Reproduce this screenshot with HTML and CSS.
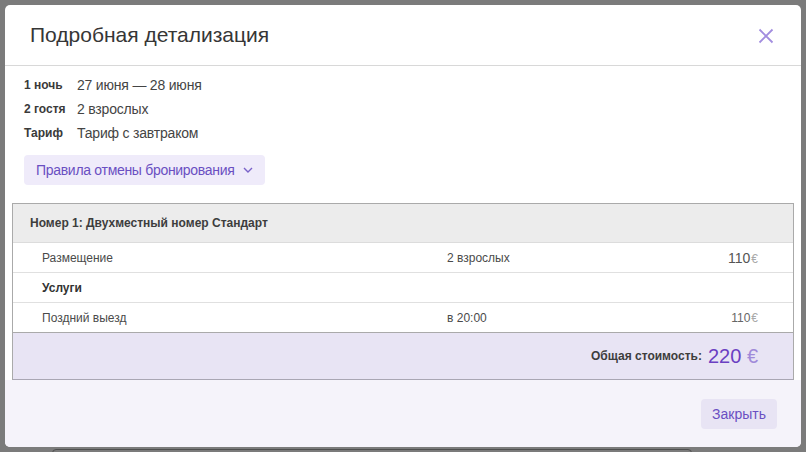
FILE: index.html
```html
<!DOCTYPE html>
<html>
	<head>
		<meta charset="utf-8">
		<title>Подробная детализация</title>
		<link rel="stylesheet" href="styles.css">
	</head>
	<body>
		<div class="backdrop-page"></div>
		<div class="modal">
			<div class="modal-header">
				<h1 class="modal-title">Подробная детализация</h1>
				<span class="modal-close">
					<svg width="16" height="16" viewBox="0 0 16 16"><path d="M1.5 1.5 L14.5 14.5 M14.5 1.5 L1.5 14.5" stroke="#a28ddf" stroke-width="1.8" fill="none"/></svg>
				</span>
			</div>
			<div class="modal-body">
				<div class="stay-info">
					<div class="stay-row"><span class="stay-label">1 ночь</span><span class="stay-value">27 июня — 28 июня</span></div>
					<div class="stay-row"><span class="stay-label">2 гостя</span><span class="stay-value">2 взрослых</span></div>
					<div class="stay-row"><span class="stay-label">Тариф</span><span class="stay-value">Тариф с завтраком</span></div>
				</div>
				<button class="rules-button">Правила отмены бронирования
					<svg width="10" height="6" viewBox="0 0 10 6"><path d="M1 1 L5 5 L9 1" stroke="#7a62c9" stroke-width="1.4" fill="none"/></svg>
				</button>
				<div class="price-table">
					<div class="price-table-header">Номер 1: Двухместный номер Стандарт</div>
					<div class="price-row">
						<span class="price-name">Размещение</span>
						<span class="price-detail">2 взрослых</span>
						<span class="price-sum price-sum-big">110<span class="euro">€</span></span>
					</div>
					<div class="price-row">
						<span class="price-name price-group">Услуги</span>
					</div>
					<div class="price-row">
						<span class="price-name">Поздний выезд</span>
						<span class="price-detail">в 20:00</span>
						<span class="price-sum">110<span class="euro">€</span></span>
					</div>
					<div class="price-total">
						<span class="total-label">Общая стоимость:</span>
						<span class="total-sum">220 <span class="euro">€</span></span>
					</div>
				</div>
			</div>
			<div class="modal-footer">
				<button class="close-button">Закрыть</button>
			</div>
		</div>
	</body>
</html>
```

FILE: styles.css
```css
body {
    margin: 0;
    padding: 5px;
    background-color: #7b7b7b;
    font-family: "Liberation Sans", Arial, sans-serif;
    color: #333;
}

div.backdrop-page {
    position: absolute;
    left: 52px;
    top: 449px;
    width: 638px;
    height: 10px;
    border: 1px solid #4f4f4f;
    border-radius: 4px;
}

div.modal {
    position: relative;
    width: 796px;
    height: 442px;
    background-color: #fff;
    border-radius: 5px;
    overflow: hidden;
    display: flex;
    flex-direction: column;
}

div.modal-header {
    height: 60px;
    border-bottom: 1px solid #d8d8d8;
    display: flex;
    align-items: center;
    justify-content: space-between;
    padding: 0 27px 0 25px;
}

h1.modal-title {
    margin: 0;
    font-size: 21px;
    font-weight: normal;
    color: #363636;
}

span.modal-close {
    display: flex;
    margin-top: 2px;
}

div.modal-body {
    flex: 1;
    padding: 7px 7px 0 7px;
}

div.stay-info {
    padding-left: 12px;
}

div.stay-row {
    display: flex;
    align-items: center;
    height: 24px;
}

span.stay-label {
    width: 53px;
    font-size: 12px;
    font-weight: bold;
    color: #3a3a3a;
}

span.stay-value {
    font-size: 14px;
    letter-spacing: -0.2px;
    color: #444;
}

button.rules-button {
    margin: 10px 0 0 12px;
    height: 30px;
    padding: 0 12px;
    border: none;
    border-radius: 4px;
    background-color: #efebfa;
    color: #6a4fc2;
    font-family: inherit;
    font-size: 14px;
    letter-spacing: -0.3px;
    display: flex;
    align-items: center;
    gap: 8px;
}

div.price-table {
    margin-top: 18px;
    border: 1px solid #aaa;
    border-bottom-color: #a9a6b3;
}

div.price-table-header {
    height: 38px;
    line-height: 38px;
    padding-left: 17px;
    background-color: #ececec;
    font-size: 12px;
    font-weight: bold;
    color: #3d3d3d;
    border-bottom: 1px solid #dcdcdc;
}

div.price-row {
    display: grid;
    grid-template-columns: 405px 1fr auto;
    align-items: center;
    height: 29px;
    padding: 0 35px 0 29px;
    border-bottom: 1px solid #e0e0e0;
    font-size: 12px;
    color: #4a4a4a;
}

div.price-row:nth-last-child(2) {
    border-bottom-color: #aaa;
}

span.price-group {
    font-weight: bold;
    color: #333;
}

span.price-sum {
    grid-column: 3;
    color: #666;
}

span.price-sum-big {
    font-size: 14px;
    color: #555;
}

span.euro {
    margin-left: 1px;
    color: #a9a9a9;
    font-size: 12px;
}

div.price-total {
    height: 46px;
    background-color: #e8e4f4;
    display: flex;
    align-items: center;
    justify-content: flex-end;
    padding-right: 35px;
    gap: 6px;
}

span.total-label {
    font-size: 12px;
    font-weight: bold;
    color: #3d3d3d;
}

span.total-sum {
    font-size: 20px;
    color: #6b3fc2;
}

span.total-sum span.euro {
    font-size: 20px;
    color: #a08ad9;
    margin-left: 0;
}

div.modal-footer {
    height: 67px;
    background-color: #f5f3fa;
    display: flex;
    justify-content: flex-end;
    align-items: flex-start;
    padding: 19px 24px 0 0;
    box-sizing: border-box;
}

button.close-button {
    width: 76px;
    height: 30px;
    border: none;
    border-radius: 4px;
    background-color: #e8e4f4;
    color: #6a4fc2;
    font-family: inherit;
    font-size: 14px;
}
```
